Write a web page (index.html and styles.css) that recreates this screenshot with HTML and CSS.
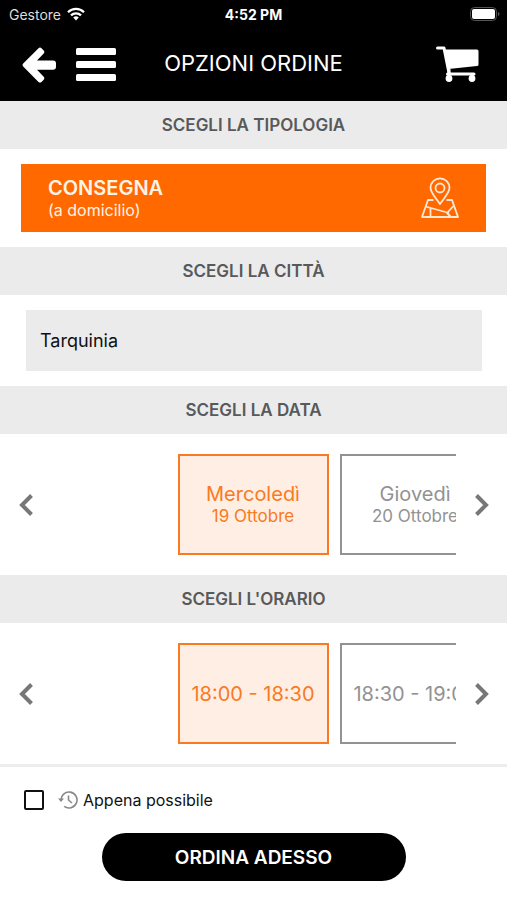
FILE: index.html
```html
<!DOCTYPE html>
<html lang="it">
<head>
    <meta charset="UTF-8">
    <meta name="viewport" content="width=device-width, initial-scale=1.0">
    <title>Opzioni ordine</title>
    <link rel="stylesheet" href="styles.css">
</head>
<body>
    <div class="status-bar">
        <div class="carrier">
            <span>Gestore</span>
            <svg width="18" height="14" viewBox="0 0 18 14" fill="none" stroke="#fff" stroke-width="2.3">
                <path d="M1 5.2a11.3 11.3 0 0 1 16 0"/>
                <path d="M4 8.4a7 7 0 0 1 10 0"/>
                <path d="M9 13.6l-2.8-3a4 4 0 0 1 5.6 0z" fill="#fff" stroke="none"/>
            </svg>
        </div>
        <div class="clock">4:52 PM</div>
        <svg class="battery" width="30" height="15" viewBox="0 0 30 15">
            <rect x="0.5" y="0.5" width="26" height="13" rx="4" fill="#000" stroke="#555"/>
            <rect x="2" y="2" width="23" height="10" rx="2" fill="#fff"/>
            <path d="M28 5c2 .6 2 3.4 0 4z" fill="#555"/>
        </svg>
    </div>

    <header class="header">
        <div class="header-left">
            <button class="icon-btn" type="button" aria-label="Indietro">
                <svg width="34" height="36" viewBox="0 0 34 36" fill="#fff">
                    <path d="M1.2 16.5L16.5 1.2q1.5-1.2 3 0l2.2 2.2q1.3 1.5 0 3L15 13.5h16q3 0 3 3v3.2q0 3-3 3H15l6.700 7q1.300 1.500 0 3l-2.200 2.200q-1.500 1.200-3 0L1.200 19.500q-1.300-1.500 0-3z"/>
                </svg>
            </button>
            <button class="icon-btn" type="button" aria-label="Menu">
                <svg width="40" height="34" viewBox="0 0 40 34" fill="#fff">
                    <rect y="0" width="40" height="7" rx="1.5"/>
                    <rect y="13" width="40" height="7" rx="1.5"/>
                    <rect y="26" width="40" height="7" rx="1.5"/>
                </svg>
            </button>
        </div>
        <h1>OPZIONI ORDINE</h1>
        <button class="icon-btn cart" type="button" aria-label="Carrello">
            <svg width="43" height="37" viewBox="0 0 43 37" fill="none" stroke="#fff">
                <path d="M1.5 2H8l5 25" stroke-width="3" stroke-linecap="round" stroke-linejoin="round"/>
                <path d="M9 3.5h32q1.500 0 1.500 1.500v13.500q0 1.500-1.500 1.500L12.500 23z" fill="#fff" stroke="none"/>
                <path d="M11.500 28H38" stroke-width="3" stroke-linecap="round"/>
                <path d="M13 23v9M36 28v4" stroke-width="3"/>
                <circle cx="13" cy="32.500" r="3.400" fill="#fff" stroke="none"/>
                <circle cx="36" cy="32.500" r="3.400" fill="#fff" stroke="none"/>
            </svg>
        </button>
    </header>

    <main>
        <h2>SCEGLI LA TIPOLOGIA</h2>
        <div class="tipologia">
            <button class="consegna" type="button">
                <span class="consegna-text">
                    <strong>CONSEGNA</strong>
                    <span>(a domicilio)</span>
                </span>
                <svg width="38" height="42" viewBox="0 0 38 42" fill="none" stroke="#ffe9d6" stroke-width="1.8" stroke-linejoin="round">
                    <path d="M19 27C14 20 9.5 15.500 9.500 10.800a9.500 9.500 0 0 1 19 0C28.500 15.500 24 20 19 27z"/>
                    <circle cx="19" cy="11" r="4.500"/>
                    <path d="M12.500 23H7L1 40h36L31 23h-5.500"/>
                    <path d="M4.500 29.500L28 36M9.500 31v9M32.500 29L26 36l4 4"/>
                </svg>
            </button>
        </div>

        <h2><label for="citta">SCEGLI LA CITTÀ</label></h2>
        <div class="citta">
            <select id="citta">
                <option>Tarquinia</option>
            </select>
        </div>

        <h2>SCEGLI LA DATA</h2>
        <div class="carousel">
            <button class="arrow" type="button" aria-label="Data precedente">
                <svg width="14" height="22" viewBox="0 0 14 22" fill="none" stroke="#777" stroke-width="4"><path d="M12.500 1.500L3 11l9.500 9.500"/></svg>
            </button>
            <div class="slides">
                <button class="slot active" type="button">
                    <span>Mercoledì</span>
                    <small>19 Ottobre</small>
                </button>
                <button class="slot" type="button">
                    <span>Giovedì</span>
                    <small>20 Ottobre</small>
                </button>
            </div>
            <button class="arrow" type="button" aria-label="Data successiva">
                <svg width="14" height="22" viewBox="0 0 14 22" fill="none" stroke="#777" stroke-width="4"><path d="M1.500 1.500L11 11l-9.500 9.500"/></svg>
            </button>
        </div>

        <h2>SCEGLI L'ORARIO</h2>
        <div class="carousel">
            <button class="arrow" type="button" aria-label="Orario precedente">
                <svg width="14" height="22" viewBox="0 0 14 22" fill="none" stroke="#777" stroke-width="4"><path d="M12.500 1.500L3 11l9.500 9.500"/></svg>
            </button>
            <div class="slides">
                <button class="slot active" type="button"><span>18:00 - 18:30</span></button>
                <button class="slot" type="button"><span>18:30 - 19:00</span></button>
            </div>
            <button class="arrow" type="button" aria-label="Orario successivo">
                <svg width="14" height="22" viewBox="0 0 14 22" fill="none" stroke="#777" stroke-width="4"><path d="M1.500 1.500L11 11l-9.500 9.500"/></svg>
            </button>
        </div>
    </main>

    <footer class="footer">
        <div class="asap">
            <input type="checkbox" id="asap">
            <label for="asap">
                <svg width="20" height="18" viewBox="0 0 20 18" fill="none" stroke="#888" stroke-width="1.6">
                    <path d="M3 9.500a8 8 0 1 1 3.200 5.900"/>
                    <path d="M0 7.500h6L3 11z" fill="#888" stroke="none"/>
                    <path d="M10.500 4.500V9l3.500 3"/>
                </svg>
                <span>Appena possibile</span>
            </label>
        </div>
        <button class="order-btn" type="button">ORDINA ADESSO</button>
    </footer>
</body>
</html>
```
FILE: styles.css
```css
* {
    box-sizing: border-box;
}

body {
    margin: 0;
    font-family: Inter, 'Liberation Sans', sans-serif;
    background-color: #fff;
    color: #111;
}

button, select, input {
    font-family: inherit;
    margin: 0;
}

button {
    padding: 0;
    border: none;
    background: none;
    cursor: pointer;
}

svg {
    display: block;
}

/* status bar */
.status-bar {
    display: grid;
    grid-template-columns: 1fr auto 1fr;
    align-items: center;
    height: 28px;
    padding: 0 7px;
    background-color: #000;
    color: #fff;
    font-size: 14px;
}

.carrier {
    display: flex;
    align-items: center;
    gap: 6px;
    padding-left: 2px;
    color: #ddd;
}

.clock {
    font-weight: 700;
}

.battery {
    justify-self: end;
}

/* header */
.header {
    display: grid;
    grid-template-columns: 1fr auto 1fr;
    align-items: center;
    height: 73px;
    padding: 0 22px;
    background-color: #000;
    color: #fff;
}

.header-left {
    display: flex;
    align-items: center;
    gap: 20px;
}

.cart {
    justify-self: end;
    margin-right: 6px;
}

h1 {
    margin: 0;
    padding-bottom: 4px;
    font-size: 22px;
    font-weight: 400;
}

h2 {
    display: flex;
    align-items: center;
    justify-content: center;
    height: 48px;
    margin: 0;
    background-color: #ebebeb;
    color: #58595b;
    font-size: 17px;
    font-weight: 600;
}

.tipologia {
    padding: 15px 21px;
}

.consegna {
    display: flex;
    align-items: center;
    justify-content: space-between;
    width: 100%;
    height: 68px;
    padding: 0 27px;
    background-color: #ff6900;
    color: #fff3e6;
    text-align: left;
}

.consegna-text {
    display: flex;
    flex-direction: column;
    font-size: 16px;
    line-height: 20px;
}

.consegna strong {
    font-size: 20px;
    font-weight: 600;
    line-height: 24px;
}

.citta {
    padding: 15px 25px 15px 26px;
}

.citta select {
    display: block;
    width: 100%;
    height: 61px;
    padding: 0 14px;
    border: none;
    border-radius: 0;
    background-color: #ebebeb;
    color: #111;
    font-size: 18px;
    appearance: none;
}

/* date and time pickers */
.carousel {
    display: flex;
    align-items: center;
    padding: 20px 0;
}

.arrow {
    display: flex;
    flex: 0 0 51px;
    align-items: center;
    justify-content: center;
    height: 101px;
}

.slides {
    display: flex;
    flex: 1;
    gap: 11px;
    min-width: 0;
    padding-left: calc(50% - 127px);
    overflow: hidden;
}

.slot {
    display: flex;
    flex: 0 0 151px;
    flex-direction: column;
    align-items: center;
    justify-content: center;
    height: 101px;
    border: 2px solid #929292;
    color: #929292;
    font-size: 20px;
    line-height: 24px;
    white-space: nowrap;
}

.slot small {
    font-size: 17px;
    line-height: 21px;
}

.slot.active {
    border-color: #f97a22;
    background-color: #ffeee3;
    color: #f97a22;
}

/* footer */
.footer {
    display: flex;
    flex-direction: column;
    align-items: center;
    gap: 22px;
    padding: 22px 24px 19px;
    border-top: 3px solid #ededed;
}

.asap {
    display: flex;
    align-items: center;
    align-self: flex-start;
    gap: 14px;
    height: 22px;
}

.asap input {
    width: 20px;
    height: 20px;
    border: 2px solid #111;
    border-radius: 2px;
    background-color: #fff;
    appearance: none;
}

.asap input:checked {
    background-color: #ff6900;
}

.asap label {
    display: flex;
    align-items: center;
    gap: 5px;
    font-size: 16px;
}

.order-btn {
    width: 304px;
    max-width: 100%;
    height: 48px;
    border-radius: 24px;
    background-color: #000;
    color: #fff;
    font-size: 19px;
    font-weight: 600;
}
```
